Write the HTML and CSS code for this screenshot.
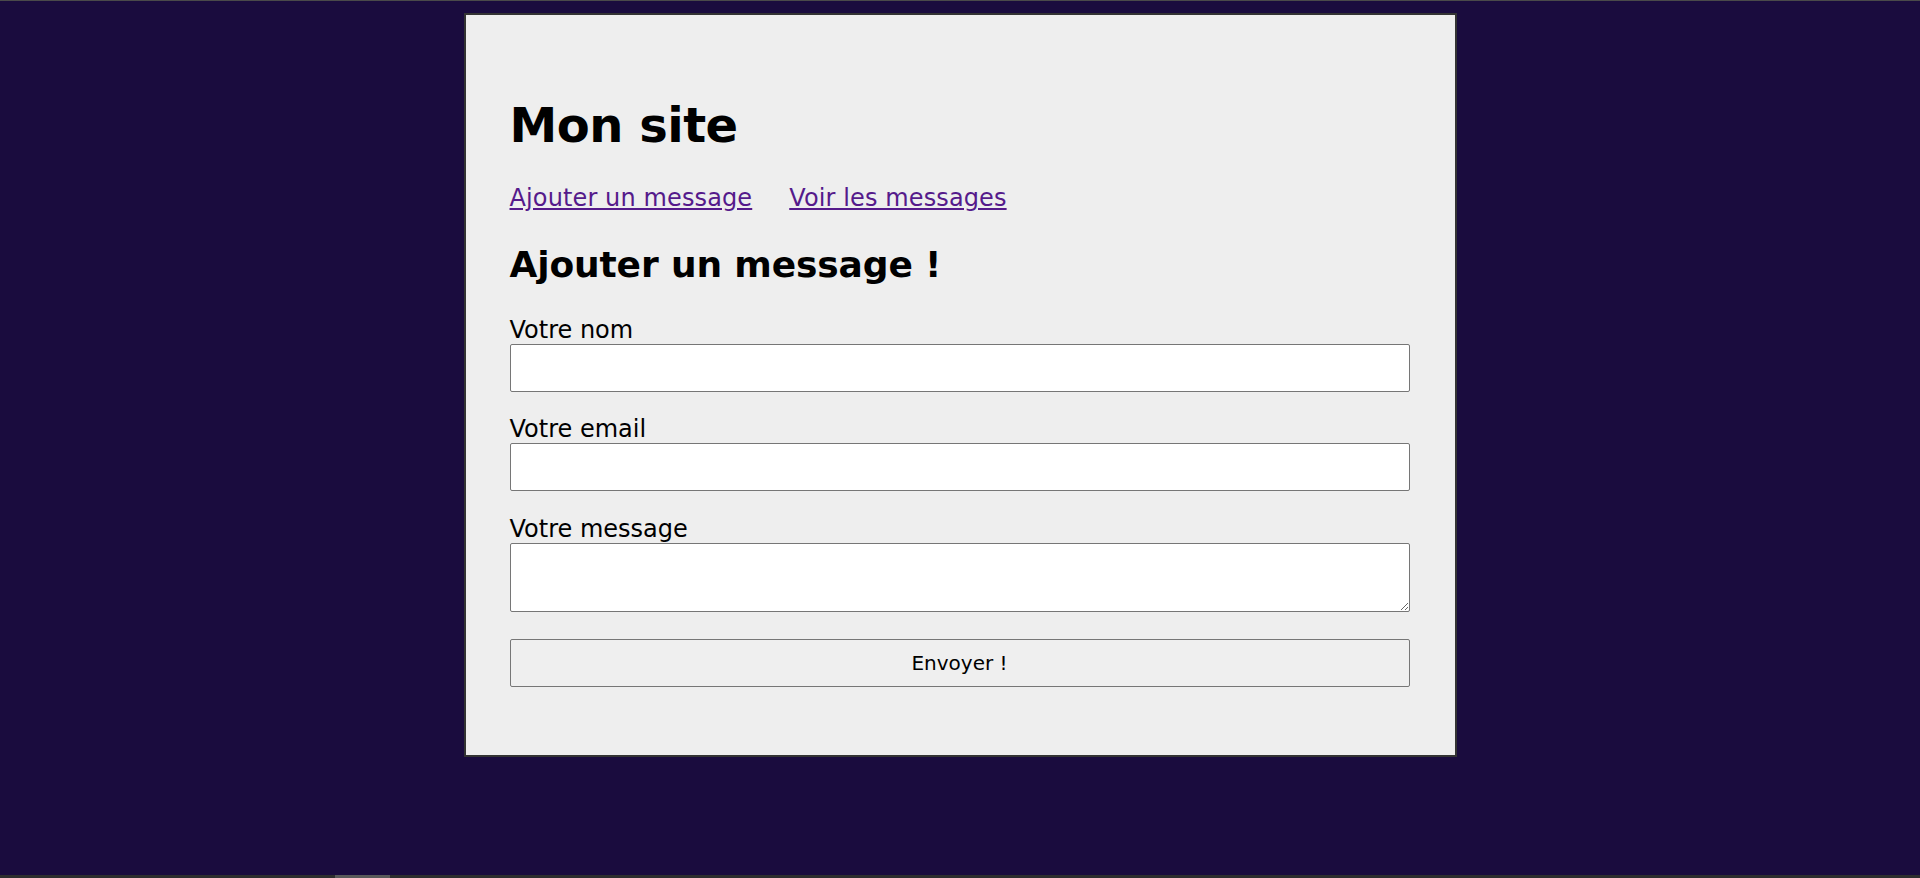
FILE: index.html
```html
<!DOCTYPE html>
<html lang="fr">
<head>
<meta charset="utf-8">
<title>Mon site</title>
<link rel="stylesheet" href="styles.css">
</head>
<body>
<main class="card">
  <h1 class="site-title">Mon site</h1>
  <nav class="nav">
    <a href="#ajouter" class="nav-link">Ajouter un message</a>
    <a href="#voir" class="nav-link">Voir les messages</a>
  </nav>
  <h2 class="section-title">Ajouter un message !</h2>
  <form class="form">
    <div class="field">
      <label class="label" for="nom">Votre nom</label>
      <input class="input" type="text" id="nom">
    </div>
    <div class="field field-mid">
      <label class="label" for="email">Votre email</label>
      <input class="input" type="email" id="email">
    </div>
    <div class="field field-last">
      <label class="label" for="message">Votre message</label>
      <textarea class="textarea" id="message"></textarea>
    </div>
    <button class="button" type="submit">Envoyer !</button>
  </form>
</main>
<div class="hscroll"><div class="hscroll-thumb"></div></div>
</body>
</html>
```
FILE: styles.css
```css
html, body {
  margin: 0;
  padding: 0;
}

body {
  background: #1a0c3e;
  border-top: 1px solid #4a4a4a;
  min-height: 877px;
  box-sizing: border-box;
  font-family: "DejaVu Sans", Verdana, sans-serif;
  color: #000;
  overflow: hidden;
}

.card {
  box-sizing: border-box;
  width: 993px;
  margin: 12px auto 0;
  background: #eeeeee;
  border: 2px solid #333333;
  padding: 50px 45px 68px 44px;
  display: flex;
  flex-direction: column;
}

.site-title {
  margin: 32px 0 0;
  font-size: 48px;
  line-height: 56px;
  font-weight: bold;
  letter-spacing: -0.5px;
}

.nav {
  display: flex;
  gap: 37px;
  margin-top: 31px;
  font-size: 24px;
  line-height: 28px;
}

.nav-link {
  color: #551a8b;
  text-decoration: underline;
  letter-spacing: 0.12px;
}

.section-title {
  margin: 32px 0 0;
  font-size: 36px;
  line-height: 42px;
  font-weight: bold;
  letter-spacing: -0.13px;
}

.form {
  margin-top: 30px;
  display: flex;
  flex-direction: column;
}

.field {
  display: flex;
  flex-direction: column;
  margin-bottom: 23px;
}

.field-mid {
  margin-bottom: 24px;
}

.field-last {
  margin-bottom: 27px;
}

.label {
  font-size: 24px;
  line-height: 28px;
}

.input,
.textarea {
  box-sizing: border-box;
  width: 900px;
  margin: 0;
  background: #ffffff;
  border: 1px solid #767676;
  border-radius: 2px;
  font-family: "DejaVu Sans", sans-serif;
  font-size: 20px;
  padding: 2px 3px;
}

.input {
  height: 48px;
}

.textarea {
  height: 69px;
  resize: vertical;
  font-family: "DejaVu Sans Mono", monospace;
}

.button {
  box-sizing: border-box;
  width: 900px;
  height: 48px;
  margin: 0;
  background: #efefef;
  border: 1px solid #767676;
  border-radius: 2px;
  font-family: "DejaVu Sans", sans-serif;
  font-size: 20px;
  color: #000;
  padding: 0;
}

.hscroll {
  position: fixed;
  left: 0;
  right: 0;
  bottom: 0;
  height: 3px;
  background: #2e2e2e;
}

.hscroll-thumb {
  width: 55px;
  height: 3px;
  margin-left: 335px;
  background: #5a5a5a;
}
```
